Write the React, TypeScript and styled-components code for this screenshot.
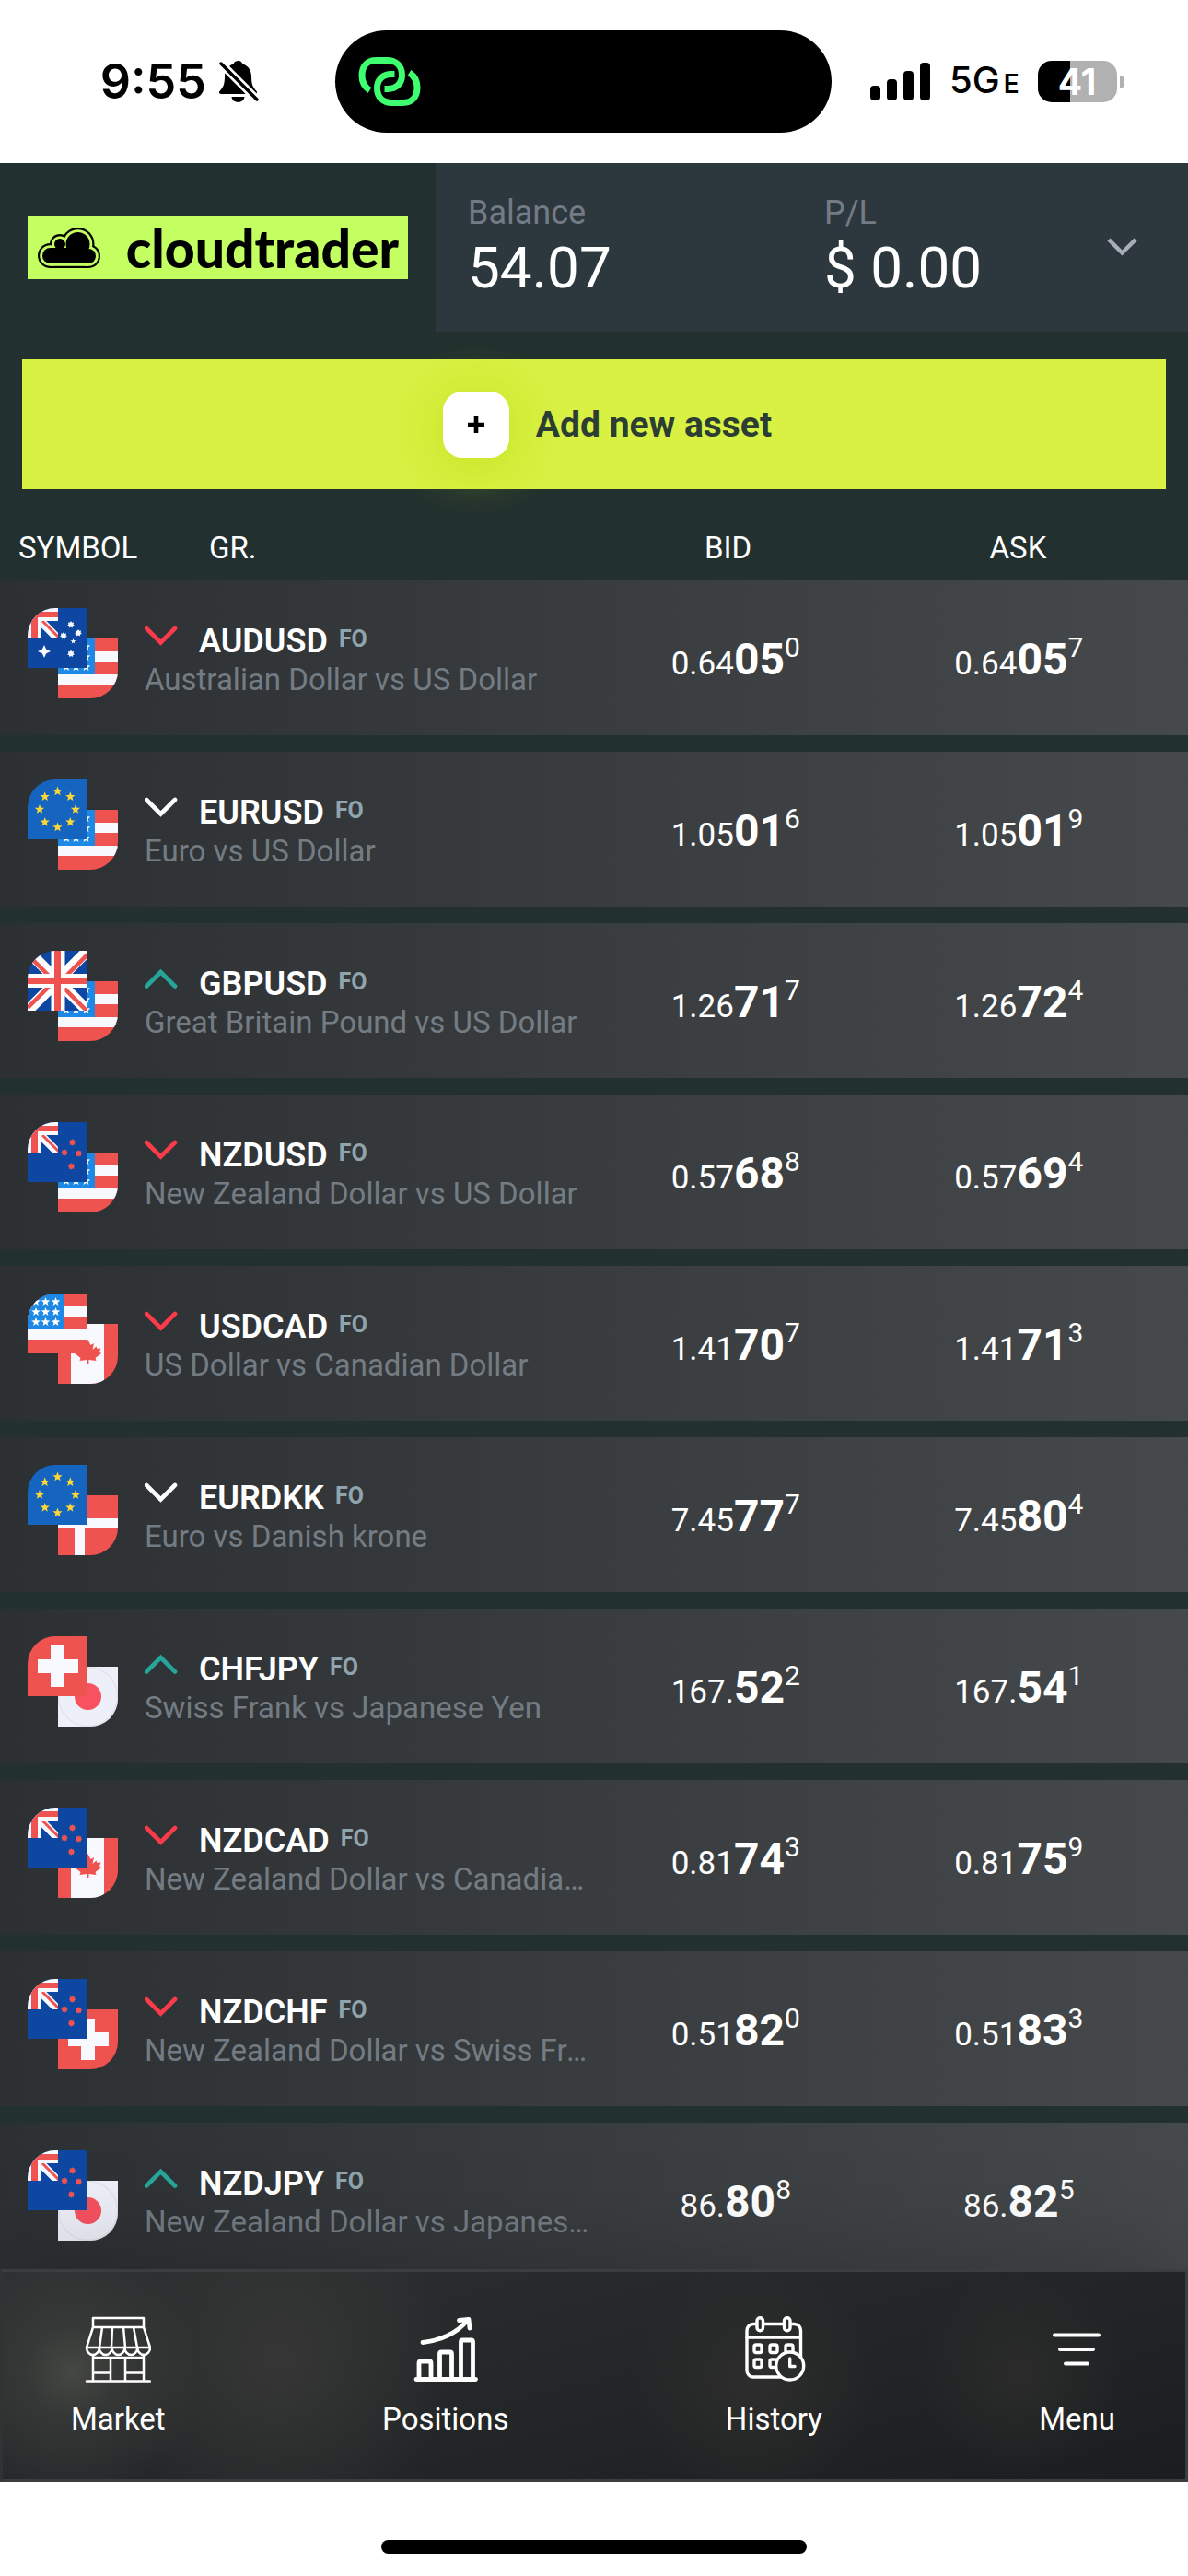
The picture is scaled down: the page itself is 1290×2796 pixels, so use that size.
import React from "react";
import styled, { createGlobalStyle } from "styled-components";

const color = {
  page: "#22302f",
  panel: "#2c383d",
  muted: "#747a86",
  lime: "#d8f143",
  logo: "#c4ff61",
  up: "#26a69a",
  down: "#fb3b4a",
  flat: "#ffffff",
  flagRed: "#ef5350",
  flagBlue: "#0d47a1",
  flagWhite: "#f8f9ff",
};

const GlobalStyle = createGlobalStyle`
  *, *::before, *::after { box-sizing: border-box; }
  body { margin: 0; background: #ffffff; }
  button { font: inherit; color: inherit; border: 0; background: none; padding: 0; cursor: pointer; }
  svg { display: block; flex: none; }
`;

const Screen = styled.div`
  display: flex;
  flex-direction: column;
  height: 100vh;
  background: ${color.page};
  color: #ffffff;
  font-family: Roboto, "Noto Sans", sans-serif;
`;

/* ---------- status bar ---------- */

const StatusBar = styled.div`
  flex: none;
  display: grid;
  grid-template-columns: 364px 539px 1fr;
  align-items: center;
  height: 177px;
  background: #ffffff;
  color: #000000;
  font-family: Inter, "Liberation Sans", sans-serif;
`;

const Clock = styled.div`
  display: flex;
  align-items: center;
  justify-content: flex-end;
  gap: 14px;
  padding-right: 83px;
  font-size: 52px;
  font-weight: 600;
  line-height: 64px;
`;

const Island = styled.div`
  display: flex;
  align-items: center;
  height: 111px;
  padding-left: 25px;
  border-radius: 56px;
  background: #000000;
`;

const Signals = styled.div`
  display: flex;
  align-items: center;
  padding-left: 42px;
`;

const Network = styled.span`
  margin: 0 20px;
  font-size: 40px;
  font-weight: 500;
  line-height: 52px;

  small {
    margin-left: 4px;
    font-size: 28px;
    font-weight: 600;
  }
`;

const Battery = styled.div`
  display: flex;
  align-items: center;
  gap: 3px;

  &::after {
    content: "";
    width: 5px;
    height: 14px;
    border-radius: 0 5px 5px 0;
    background: #b1b1b1;
  }
`;

const BatteryBody = styled.div<{ $level: number }>`
  width: 86px;
  height: 45px;
  border-radius: 15px;
  background: linear-gradient(90deg, #000000 ${(p) => p.$level}%, #b1b1b1 ${(p) => p.$level}%);
  color: #ffffff;
  font-size: 39px;
  font-weight: 700;
  line-height: 45px;
  text-align: center;
`;

/* ---------- account header ---------- */

const Header = styled.header`
  flex: none;
  display: flex;
  height: 183px;
`;

const LogoArea = styled.div`
  display: flex;
  align-items: center;
  width: 473px;
  padding: 0 30px;
`;

const Logo = styled.div`
  flex: 1;
  display: flex;
  align-items: center;
  justify-content: space-between;
  height: 69px;
  padding: 0 10px 0 11px;
  background: ${color.logo};
  color: #000000;
`;

const Wordmark = styled.span`
  font-family: Lato, "Open Sans", sans-serif;
  font-size: 57px;
  font-weight: 900;
  line-height: 64px;
`;

const Account = styled.section`
  flex: 1;
  display: grid;
  grid-template-columns: 387px 1fr auto;
  padding: 32px 54px 0 35px;
  background: ${color.panel};
`;

const Figure = styled.div`
  font-size: 62px;
  line-height: 76px;
`;

const FigureLabel = styled.div`
  color: ${color.muted};
  font-size: 36px;
  line-height: 44px;
`;

const ExpandButton = styled.button`
  align-self: start;
  height: 118px;
`;

/* ---------- add asset ---------- */

const AddAsset = styled.button`
  flex: none;
  display: flex;
  align-items: center;
  justify-content: center;
  gap: 29px;
  height: 141px;
  margin: 30px 24px 0;
  padding-left: 29px;
  background: ${color.lime};
  color: #2c3d33;
  font-size: 39px;
  font-weight: 700;
`;

const PlusTile = styled.span`
  display: grid;
  place-items: center;
  width: 72px;
  height: 72px;
  border-radius: 21px;
  background: #ffffff;
  box-shadow: 0 6px 60px rgba(184, 217, 9, 0.7);
`;

/* ---------- quotes ---------- */

const ListArea = styled.main`
  flex: 1 1 0;
  min-height: 0;
  margin-top: 27px;
  overflow: hidden;
`;

const Quotes = styled.table`
  display: block;
`;

const QuotesHead = styled.thead`
  display: block;
`;

const HeadRow = styled.tr`
  display: grid;
  grid-template-columns: 207px 1fr 315px 315px;
  height: 72px;
  padding: 17px 27px 0 20px;
`;

const HeadCell = styled.th<{ $center?: boolean }>`
  padding: 0;
  font-size: 33px;
  font-weight: 400;
  line-height: 40px;
  text-align: ${(p) => (p.$center ? "center" : "left")};
`;

const QuotesBody = styled.tbody`
  display: flex;
  flex-direction: column;
  gap: 18px;
`;

const QuoteRow = styled.tr`
  display: grid;
  grid-template-columns: 127px minmax(0, 1fr) 25% 25%;
  height: 168px;
  padding: 0 30px;
  background: linear-gradient(90deg, #2c3033, #45494b);
`;

const FlagCell = styled.td`
  padding: 30px 0 0;
`;

const FlagPair = styled.div`
  display: grid;
  grid-template: 33px 32px 33px / 33px 32px 33px;
`;

const FlagFrame = styled.div<{ $front?: boolean }>`
  grid-area: ${(p) => (p.$front ? "1 / 1 / 3 / 3" : "2 / 2 / 4 / 4")};
  z-index: ${(p) => (p.$front ? 1 : 0)};
  overflow: hidden;
  border-radius: ${(p) => (p.$front ? "30px 0 0 0" : "0 0 30px 0")};
`;

const InfoCell = styled.td`
  padding: 45px 0 0;
`;

const SymbolLine = styled.div`
  display: flex;
  align-items: flex-start;
`;

const SymbolName = styled.strong`
  margin: 0 12px 0 23px;
  font-size: 36px;
  font-weight: 600;
  line-height: 42px;
`;

const Group = styled.span`
  color: #90a4ae;
  font-size: 25px;
  font-weight: 700;
  line-height: 38px;
`;

const Description = styled.div`
  overflow: hidden;
  color: #747c83;
  font-size: 33px;
  line-height: 42px;
  text-overflow: ellipsis;
  white-space: nowrap;
`;

const PriceCell = styled.td`
  display: flex;
  align-items: baseline;
  justify-content: center;
  padding: 58px 0 0;
  font-size: 35px;
  line-height: 56px;

  strong {
    font-size: 48px;
    font-weight: 700;
  }

  sup {
    align-self: flex-start;
    font-size: 30px;
    line-height: 30px;
  }
`;

/* ---------- bottom navigation ---------- */

const TabBar = styled.nav`
  position: relative;
  flex: none;
  display: flex;
  justify-content: space-between;
  height: 231px;
  padding: 48px 76px 0 74px;
  border: 3px solid #3b3e3f;
  border-left-color: #303334;
  background:
    radial-gradient(circle at 75px 108px, #454743 0, rgba(62, 64, 61, 0.6) 50px, rgba(62, 64, 61, 0) 140px),
    radial-gradient(circle at 300px 92px, #363636 0, rgba(54, 54, 54, 0) 190px),
    radial-gradient(circle at 815px 118px, #2d2d2c 0, rgba(45, 45, 44, 0) 130px),
    radial-gradient(circle at 1105px 108px, #2b2b2b 0, rgba(43, 43, 43, 0) 110px),
    linear-gradient(165deg, #2d3031 0%, #242728 50%, #1b1e1f 100%);
  box-shadow: 0 0 120px rgba(0, 0, 0, 0.25);
`;

const Tab = styled.a`
  display: flex;
  flex-direction: column;
  align-items: center;
  gap: 20px;
  color: #ffffff;
  font-size: 33px;
  line-height: 40px;
  text-decoration: none;
`;

const HomeArea = styled.div`
  position: relative;
  flex: none;
  display: flex;
  justify-content: center;
  height: 102px;
  padding-top: 63px;
  background: #ffffff;

  &::before {
    content: "";
    width: 462px;
    height: 15px;
    border-radius: 8px;
    background: #000000;
  }
`;

/* ---------- drawings ---------- */

const starPoints = (cx: number, cy: number, r: number, spikes = 5, inner = 0.42) =>
  Array.from({ length: spikes * 2 }, (_, i) => {
    const radius = i % 2 ? r * inner : r;
    const angle = (Math.PI * i) / spikes - Math.PI / 2;
    return `${(cx + radius * Math.cos(angle)).toFixed(2)},${(cy + radius * Math.sin(angle)).toFixed(2)}`;
  }).join(" ");

type StarProps = { x: number; y: number; r: number; fill: string; spikes?: number; inner?: number };
const Star = ({ x, y, r, fill, spikes, inner }: StarProps) => (
  <polygon points={starPoints(x, y, r, spikes, inner)} fill={fill} />
);

const UnionCanton = () => (
  <svg width="33" height="33" viewBox="0 0 33 33">
    <rect width="33" height="33" fill={color.flagBlue} />
    <path d="M12 12L35 35" stroke={color.flagWhite} strokeWidth="9" />
    <path d="M16 14L35 33" stroke={color.flagRed} strokeWidth="3" />
    <path d="M0 0H33V14H14V33H0z" fill={color.flagWhite} />
    <path d="M4 4H33V10H11V33H4z" fill={color.flagRed} />
  </svg>
);

const leafHalf = [
  [0, -14], [3, -8], [6.5, -10], [5, -3], [9, -6.5], [10, -4], [14, -4.5], [12.5, -0.5],
  [14.5, 1], [8, 6], [9, 9], [1, 8], [0.9, 12],
];
const leafPoints = [...leafHalf, ...leafHalf.slice().reverse().map(([x, y]) => [-x, y])]
  .map(([x, y]) => `${32.5 + x},${31 + y}`)
  .join(" ");

const flagArt: Record<string, React.ReactNode> = {
  AUD: (
    <>
      <rect width="65" height="65" fill={color.flagBlue} />
      <UnionCanton />
      <Star x={18} y={47} r={7} spikes={4} inner={0.45} fill={color.flagWhite} />
      <Star x={47} y={18} r={4} spikes={7} inner={0.65} fill={color.flagWhite} />
      <Star x={55} y={27} r={4} spikes={7} inner={0.65} fill={color.flagWhite} />
      <Star x={39} y={30} r={4} spikes={7} inner={0.65} fill={color.flagWhite} />
      <Star x={49.5} y={36} r={3} fill={color.flagWhite} />
      <Star x={47} y={49.5} r={4} spikes={7} inner={0.65} fill={color.flagWhite} />
    </>
  ),
  NZD: (
    <>
      <rect width="65" height="65" fill={color.flagBlue} />
      <UnionCanton />
      {[[48.5, 22], [40, 33], [55.5, 34], [47.5, 48]].map(([x, y]) => (
        <Star key={x} x={x} y={y} r={3.8} spikes={8} inner={0.7} fill={color.flagRed} />
      ))}
    </>
  ),
  EUR: (
    <>
      <rect width="65" height="65" fill="#1565c0" />
      {Array.from({ length: 8 }, (_, i) => (
        <Star
          key={i}
          x={32.5 + 19.5 * Math.sin((i * Math.PI) / 4)}
          y={32.5 - 19.5 * Math.cos((i * Math.PI) / 4)}
          r={5.4}
          fill="#fdd835"
        />
      ))}
    </>
  ),
  GBP: (
    <>
      <rect width="65" height="65" fill={color.flagBlue} />
      <path d="M0 0L65 65M65 0L0 65" stroke="#ffffff" strokeWidth="12" />
      <path d="M0 4L28 32M37 32L65 4M0 62L28 34M65 66L37 38" stroke={color.flagRed} strokeWidth="4.5" />
      <path d="M33 0V65M0 32.5H65" stroke="#ffffff" strokeWidth="15" />
      <path d="M32.5 0V65M0 32.5H65" stroke={color.flagRed} strokeWidth="7" />
    </>
  ),
  USD: (
    <>
      <rect width="65" height="65" fill={color.flagRed} />
      <path d="M0 14H65V25H0zM0 39H65V50H0z" fill={color.flagWhite} />
      <rect width="40" height="39" fill="#1e88e5" />
      {[9, 20, 31].flatMap((y) =>
        [9, 19.5, 30.5].map((x) => <Star key={`${x}-${y}`} x={x} y={y} r={5} fill="#ffffff" />),
      )}
    </>
  ),
  CAD: (
    <>
      <rect width="65" height="65" fill={color.flagRed} />
      <rect x="14" width="36" height="65" fill={color.flagWhite} />
      <polygon points={leafPoints} fill={color.flagRed} />
    </>
  ),
  DKK: (
    <>
      <rect width="65" height="65" fill={color.flagRed} />
      <path d="M18 0H29V25H65V36H29V65H18V36H0V25H18z" fill={color.flagWhite} />
    </>
  ),
  CHF: (
    <>
      <rect width="65" height="65" fill={color.flagRed} />
      <path d="M25 10H40V25H55V40H40V55H25V40H11V25H25z" fill={color.flagWhite} />
    </>
  ),
  JPY: (
    <>
      <rect width="65" height="65" fill="#edf0f8" />
      <circle cx="32.5" cy="32.5" r="32" fill="none" stroke="#dfe2e8" strokeWidth="1.3" />
      <circle cx="32.5" cy="32.5" r="14.5" fill="#f8515f" />
    </>
  ),
};

const Flag = ({ code, front }: { code: string; front?: boolean }) => (
  <FlagFrame $front={front}>
    <svg width="65" height="65" viewBox="0 0 65 65" aria-hidden="true">
      {flagArt[code]}
    </svg>
  </FlagFrame>
);

type Direction = "up" | "down" | "flat";

const Trend = ({ direction }: { direction: Direction }) => (
  <svg width="36" height="32" viewBox="0 0 36 32" aria-label={direction}>
    <path
      d={direction === "up" ? "M2 23.5L17.5 8L33 23.5" : "M2 7L17.5 22.5L33 7"}
      fill="none"
      stroke={color[direction]}
      strokeWidth="4.6"
      strokeLinecap="round"
    />
  </svg>
);

const BellOff = () => (
  <svg width="43" height="46" viewBox="0 0 43 46" aria-label="Silent mode">
    <path d="M20.5 0c3 0 4.500 1.600 5 3.600 6 1.800 9.500 7 9.500 13.400 0 9 2 12 5.500 16 1.200 1.400.4 3-1.500 3H2c-1.900 0-2.700-1.600-1.500-3C4 29 6 26 6 17c0-6.400 3.500-11.600 9.500-13.400.5-2 2-3.600 5-3.600z" />
    <path d="M13.500 39h14a7 6 0 0 1-14 0z" />
    <path d="M2 3L41 42" stroke="#ffffff" strokeWidth="9" />
    <path d="M2 3L41 42" stroke="#000000" strokeWidth="3.5" strokeLinecap="round" />
  </svg>
);

const loopPath =
  "M12.500 36C7 32.500 4 27 4 20C4 10 9.500 3.500 19.500 3.500H31C41 3.500 47.500 9.500 47.500 19.500C47.500 29 41 34.500 32 34.500H28.500";

const LinkedLoops = () => (
  <svg width="68" height="53" viewBox="0 0 68 53" aria-hidden="true">
    <g fill="none" stroke="#3dff70" strokeWidth="7">
      <path d={loopPath} />
      <path d={loopPath} transform="rotate(180 34 26.5)" />
    </g>
  </svg>
);

const SignalBars = () => (
  <svg width="66" height="41" viewBox="0 0 66 41" aria-label="Signal">
    {[16, 23, 32, 41].map((h, i) => (
      <rect key={h} x={i * 18} y={41 - h} width="11" height={h} rx="4" />
    ))}
  </svg>
);

/* The cloud is the same outline drawn three times, each one further inset. */
const CloudShape = ({ inset, fill }: { inset: number; fill: string }) => (
  <g fill={fill}>
    <circle cx="13.5" cy="30.5" r={13.5 - inset} />
    <circle cx="24" cy="18" r={11 - inset} />
    <circle cx="43.5" cy="18" r={18 - inset} />
    <circle cx="55" cy="31" r={13 - inset} />
    <rect x="13.5" y="22" width="41.5" height={22 - inset} />
  </g>
);

const CloudMark = () => (
  <svg width="68" height="44" viewBox="0 0 68 44" aria-hidden="true">
    <CloudShape inset={0} fill="#000000" />
    <CloudShape inset={2.2} fill={color.logo} />
    <CloudShape inset={5} fill="#000000" />
  </svg>
);

const iconStroke = {
  fill: "none",
  stroke: "#ffffff",
  strokeLinecap: "round" as const,
  strokeLinejoin: "round" as const,
};

const MarketIcon = () => (
  <svg width="72" height="72" viewBox="0 0 72 72" aria-hidden="true">
    <g {...iconStroke} strokeWidth="2.5">
      <path d="M9 2H64V12H9zM9 12L2 34H71L64 12M19 12L16 34M30 12L29 34M42 12L44 34M53 12L57 34" />
      <path d="M2 34a6.900 8 0 0 0 13.800 0a6.900 8 0 0 0 13.800 0a6.900 8 0 0 0 13.800 0a6.900 8 0 0 0 13.800 0a6.900 8 0 0 0 13.800 0" />
      <path d="M9 42V70M64 42V70M9 45H64M28 46V70M44 46V70M9 61.5H28M44 61.5H64M2 70.5H71" />
    </g>
  </svg>
);

const PositionsIcon = () => (
  <svg width="70" height="72" viewBox="0 0 70 72" aria-hidden="true">
    <g {...iconStroke} strokeWidth="4.8">
      <path d="M3 68.5H67.5M6 68V51q0-2 2-2H17q2 0 2 2V68M28.5 68V41q0-2 2-2H39.5q2 0 2 2V68M51.5 68V28q0-2 2-2H62.5q2 0 2 2V68" />
      <path d="M10 28.5C28 26.5 47 19 58 5M49.5 4.5L60 3.5L61 13" />
    </g>
  </svg>
);

const HistoryIcon = () => (
  <svg width="66" height="72" viewBox="-2 0 66 72" overflow="visible" aria-hidden="true">
    <g {...iconStroke} strokeWidth="3.4">
      <rect x="2" y="8.5" width="58.5" height="57.5" rx="7" />
      <path d="M2 23H60.5" />
      <rect x="13" y="1.7" width="6.5" height="14" rx="3.25" fill="#292b2b" />
      <rect x="42.5" y="1.7" width="6.5" height="14" rx="3.25" fill="#292b2b" />
      {[31, 47].flatMap((y) =>
        [10, 27, 44].map((x) => <rect key={`${x}-${y}`} x={x} y={y} width="8" height="8.5" rx="2" />),
      )}
      <circle cx="48.7" cy="54" r="15" fill="#2a2c2c" />
      <path d="M48.7 46V54.5H54" />
    </g>
  </svg>
);

const MenuIcon = () => (
  <svg width="54" height="72" viewBox="0 0 54 72" aria-hidden="true">
    <path d="M2 20.5H50M8 36H44M14 51.5H38" {...iconStroke} strokeWidth="4" />
  </svg>
);

/* ---------- data ---------- */

type Price = [string, string, string];
type Quote = { base: string; term: string; trend: Direction; name: string; bid: Price; ask: Price };

const quotes: Quote[] = [
  { base: "AUD", term: "USD", trend: "down", name: "Australian Dollar vs US Dollar", bid: ["0.64", "05", "0"], ask: ["0.64", "05", "7"] },
  { base: "EUR", term: "USD", trend: "flat", name: "Euro vs US Dollar", bid: ["1.05", "01", "6"], ask: ["1.05", "01", "9"] },
  { base: "GBP", term: "USD", trend: "up", name: "Great Britain Pound vs US Dollar", bid: ["1.26", "71", "7"], ask: ["1.26", "72", "4"] },
  { base: "NZD", term: "USD", trend: "down", name: "New Zealand Dollar vs US Dollar", bid: ["0.57", "68", "8"], ask: ["0.57", "69", "4"] },
  { base: "USD", term: "CAD", trend: "down", name: "US Dollar vs Canadian Dollar", bid: ["1.41", "70", "7"], ask: ["1.41", "71", "3"] },
  { base: "EUR", term: "DKK", trend: "flat", name: "Euro vs Danish krone", bid: ["7.45", "77", "7"], ask: ["7.45", "80", "4"] },
  { base: "CHF", term: "JPY", trend: "up", name: "Swiss Frank vs Japanese Yen", bid: ["167.", "52", "2"], ask: ["167.", "54", "1"] },
  { base: "NZD", term: "CAD", trend: "down", name: "New Zealand Dollar vs Canadian Dollar", bid: ["0.81", "74", "3"], ask: ["0.81", "75", "9"] },
  { base: "NZD", term: "CHF", trend: "down", name: "New Zealand Dollar vs Swiss Frank", bid: ["0.51", "82", "0"], ask: ["0.51", "83", "3"] },
  { base: "NZD", term: "JPY", trend: "up", name: "New Zealand Dollar vs Japanese Yen", bid: ["86.", "80", "8"], ask: ["86.", "82", "5"] },
];

const tabs = [
  { label: "Market", Icon: MarketIcon },
  { label: "Positions", Icon: PositionsIcon },
  { label: "History", Icon: HistoryIcon },
  { label: "Menu", Icon: MenuIcon },
];

const PriceValue = ({ value: [whole, pips, point] }: { value: Price }) => (
  <PriceCell>
    <span>{whole}</span>
    <strong>{pips}</strong>
    <sup>{point}</sup>
  </PriceCell>
);

export default function App() {
  return (
    <Screen>
      <GlobalStyle />
      <StatusBar>
        <Clock>
          9:55
          <BellOff />
        </Clock>
        <Island>
          <LinkedLoops />
        </Island>
        <Signals>
          <SignalBars />
          <Network>
            5G<small>E</small>
          </Network>
          <Battery>
            <BatteryBody $level={41}>41</BatteryBody>
          </Battery>
        </Signals>
      </StatusBar>

      <Header>
        <LogoArea>
          <Logo>
            <CloudMark />
            <Wordmark>cloudtrader</Wordmark>
          </Logo>
        </LogoArea>
        <Account>
          <Figure>
            <FigureLabel>Balance</FigureLabel>
            54.07
          </Figure>
          <Figure>
            <FigureLabel>P/L</FigureLabel>$ 0.00
          </Figure>
          <ExpandButton type="button" aria-label="Show account details">
            <svg width="36" height="24" viewBox="0 0 36 24" aria-hidden="true">
              <path d="M4 4L18.5 18.5L33 4" fill="none" stroke="#a9adba" strokeWidth="4.4" />
            </svg>
          </ExpandButton>
        </Account>
      </Header>

      <AddAsset type="button">
        <PlusTile>
          <svg width="18" height="18" viewBox="0 0 18 18" aria-hidden="true">
            <path d="M9 0V18M0 9H18" stroke="#000000" strokeWidth="4.6" />
          </svg>
        </PlusTile>
        Add new asset
      </AddAsset>

      <ListArea>
        <Quotes>
          <QuotesHead>
            <HeadRow>
              <HeadCell scope="col">SYMBOL</HeadCell>
              <HeadCell scope="col">GR.</HeadCell>
              <HeadCell scope="col" $center>BID</HeadCell>
              <HeadCell scope="col" $center>ASK</HeadCell>
            </HeadRow>
          </QuotesHead>
          <QuotesBody>
            {quotes.map((q) => (
              <QuoteRow key={q.base + q.term}>
                <FlagCell>
                  <FlagPair>
                    <Flag code={q.base} front />
                    <Flag code={q.term} />
                  </FlagPair>
                </FlagCell>
                <InfoCell>
                  <SymbolLine>
                    <Trend direction={q.trend} />
                    <SymbolName>{q.base + q.term}</SymbolName>
                    <Group>FO</Group>
                  </SymbolLine>
                  <Description>{q.name}</Description>
                </InfoCell>
                <PriceValue value={q.bid} />
                <PriceValue value={q.ask} />
              </QuoteRow>
            ))}
          </QuotesBody>
        </Quotes>
      </ListArea>

      <TabBar>
        {tabs.map(({ label, Icon }) => (
          <Tab key={label} href={`#${label.toLowerCase()}`}>
            <Icon />
            {label}
          </Tab>
        ))}
      </TabBar>
      <HomeArea />
    </Screen>
  );
}
